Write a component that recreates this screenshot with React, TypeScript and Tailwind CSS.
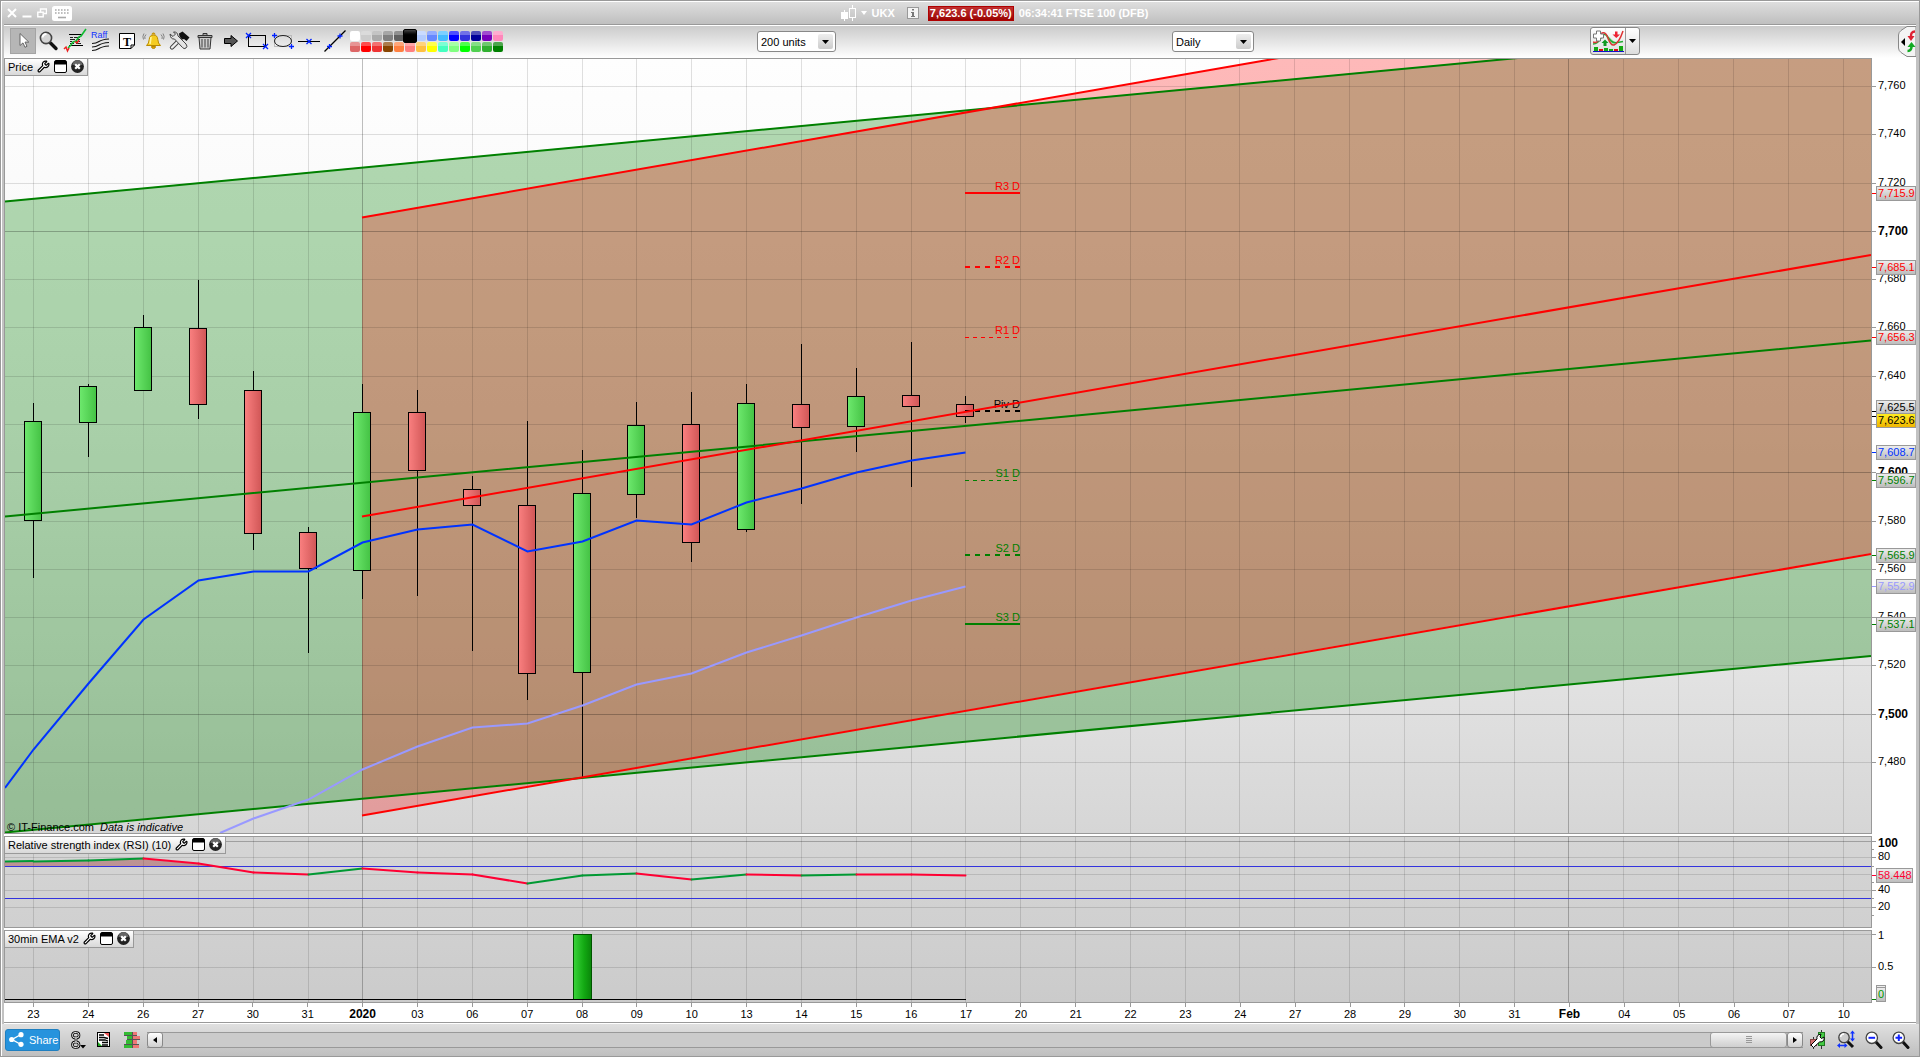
import React from "react";
import { Wrench } from "lucide-react";

/* ---------- data ---------- */

const DATES = [
  "23", "24", "26", "27", "30", "31", "2020", "03", "06", "07", "08", "09", "10", "13", "14", "15", "16",
  "17", "20", "21", "22", "23", "24", "27", "28", "29", "30", "31", "Feb", "04", "05", "06", "07", "10",
];
const isMajor = (label: string) => label === "2020" || label === "Feb";
const dateX = (i: number) => Math.floor(33.95 + 54.82 * i);
const priceY = (p: number) => Math.round(86 + (7760 - p) * 2.414);

const PRICES = [7760, 7740, 7720, 7700, 7680, 7660, 7640, 7620, 7600, 7580, 7560, 7540, 7520, 7500, 7480];
/* The last-price tag takes the place of this label on the scale. */
const COVERED_PRICE = 7620;

type Candle = [high: number, top: number, bottom: number, low: number, up: boolean];
const CANDLES: Candle[] = [
  [403, 421, 520, 578, true],
  [384, 386, 422, 457, true],
  [315, 327, 390, 390, true],
  [280, 328, 404, 419, false],
  [371, 390, 533, 550, false],
  [527, 532, 568, 653, false],
  [384, 412, 570, 599, true],
  [390, 412, 470, 596, false],
  [476, 489, 505, 651, false],
  [421, 505, 673, 700, false],
  [450, 493, 672, 777, true],
  [402, 425, 494, 518, true],
  [392, 424, 542, 562, false],
  [384, 403, 529, 532, true],
  [344, 404, 427, 504, false],
  [368, 396, 426, 452, true],
  [342, 395, 406, 487, false],
  [396, 404, 416, 423, false],
];

const FAST = [749, 683, 619, 580, 571, 571, 542, 529, 524, 551, 541, 520, 524, 502, 488, 472, 460, 452];
const SLOW = [818, 799, 769, 746, 727, 723, 705, 684, 673, 652, 635, 617, 600, 586];
const RSI = [861, 860, 858, 863, 872, 874, 868, 872, 874, 883, 875, 873, 879, 874, 875, 874, 874, 875];

const PIVOTS = [
  { label: "R3 D", y: 193, color: "#ff0000", width: 2, dash: undefined },
  { label: "R2 D", y: 267, color: "#ff0000", width: 2, dash: "5 5" },
  { label: "R1 D", y: 337, color: "#ff0000", width: 1, dash: "4 4" },
  { label: "Piv D", y: 411, color: "#000000", width: 2, dash: "5 5" },
  { label: "S1 D", y: 480, color: "#008000", width: 1, dash: "4 4" },
  { label: "S2 D", y: 555, color: "#008000", width: 2, dash: "5 5" },
  { label: "S3 D", y: 624, color: "#008000", width: 2, dash: undefined },
];

const TAGS = [
  { text: "7,715.9", y: 193, color: "#ff0000" },
  { text: "7,685.1", y: 267, color: "#ff0000" },
  { text: "7,656.3", y: 337, color: "#ff0000" },
  { text: "7,625.5", y: 407, color: "#000000" },
  { text: "7,623.6", y: 420, color: "#000000", hot: true },
  { text: "7,608.7", y: 452, color: "#0033ff" },
  { text: "7,596.7", y: 480, color: "#008000" },
  { text: "7,565.9", y: 555, color: "#008000" },
  { text: "7,552.9", y: 586, color: "#9999ff" },
  { text: "7,537.1", y: 624, color: "#008000" },
];

const SWATCHES = [
  ["#ffffff", "#cccccc", "#aaaaaa", "#808080", "#606060", "#000000", "#b3ccff", "#6688ff", "#44bbff", "#0000ff", "#3333dd", "#000099", "#7700bb", "#ff88bb"],
  ["#dd6666", "#ff0000", "#ee3333", "#884400", "#ff8040", "#ff8080", "#ffc040", "#ffff00", "#44ffc0", "#80ff80", "#00ff00", "#50d050", "#30b030", "#008000"],
];

const points = (ys: number[], from = 0) => ys.map((y, i) => `${dateX(i + from) + 0.5},${y + 0.5}`).join(" ");

/* ---------- chart pieces ---------- */

function VerticalGrid({ top, bottom }: { top: number; bottom: number }) {
  return (
    <g shapeRendering="crispEdges">
      {DATES.map((d, i) => (
        <line key={i} x1={dateX(i) + 0.5} x2={dateX(i) + 0.5} y1={top} y2={bottom} stroke="#000" strokeOpacity={isMajor(d) ? 0.25 : 0.12} />
      ))}
    </g>
  );
}

function HorizontalGrid({ rows }: { rows: { y: number; major?: boolean }[] }) {
  return (
    <g shapeRendering="crispEdges">
      {rows.map((r) => (
        <line key={r.y} x1={5} x2={1871} y1={r.y + 0.5} y2={r.y + 0.5} stroke="#000" strokeOpacity={r.major ? 0.25 : 0.12} />
      ))}
    </g>
  );
}

function PanelHeader({ title }: { title: string }) {
  return (
    <div className="absolute left-0 top-0 flex h-[17px] items-center gap-1 border-r border-b border-[#999] bg-linear-to-b from-white to-[#d8d8d8] px-[3px] pb-px">
      <span className="whitespace-nowrap">{title}</span>
      <button aria-label={`${title} settings`}>
        <Wrench className="size-[13px] fill-white text-black" strokeWidth={2.2} />
      </button>
      <button aria-label={`${title} window`}>
        <svg className="size-[13px]" viewBox="0 0 13 13">
          <rect x="0.5" y="0.5" width="12" height="12" rx="1.5" fill="#fff" stroke="#000" />
          <rect x="1" y="1" width="11" height="3.5" fill="#000" />
        </svg>
      </button>
      <button aria-label={`Close ${title}`}>
        <svg className="size-[13px]" viewBox="0 0 13 13">
          <circle cx="6.5" cy="6.5" r="6.4" fill="#222" />
          <path d="M1.5 5a5 5 0 0 1 10 0z" fill="#666" />
          <path d="M4.2 4.2l4.6 4.6M8.8 4.2L4.2 8.8" stroke="#fff" strokeWidth="2.2" />
        </svg>
      </button>
    </div>
  );
}

function Tag({ x = 1876, y, w = 39, text, color, hot }: { x?: number; y: number; w?: number; text: string; color: string; hot?: boolean }) {
  return (
    <g>
      <rect x={x + 0.5} y={y - 6.5} width={w} height={14} fill={hot ? "url(#hot)" : "url(#tag)"} stroke="#999" shapeRendering="crispEdges" />
      <text x={x + 2} y={y + 4} fill={color}>{text}</text>
    </g>
  );
}

function Tick({ y, len = 4, color = "#999" }: { y: number; len?: number; color?: string }) {
  return <rect x={1872} y={y} width={len} height={1} fill={color} shapeRendering="crispEdges" />;
}

function PricePanel() {
  return (
    <section className="flex min-h-0 flex-1">
      <div className="relative min-w-0 flex-1 border border-[#999]">
        <svg className="absolute inset-0 size-full" viewBox="5 59 1866 774" preserveAspectRatio="none" fontSize="11">
          <defs>
            <linearGradient id="back" x1="0" y1="0" x2="0" y2="1">
              <stop offset="0" stopColor="#fefefe" />
              <stop offset="0.2" stopColor="#fafafa" />
              <stop offset="0.45" stopColor="#f3f3f3" />
              <stop offset="0.8" stopColor="#e2e2e2" />
              <stop offset="1" stopColor="#d6d6d6" />
            </linearGradient>
            <linearGradient id="up">
              <stop offset="0" stopColor="#6ee96e" />
              <stop offset="1" stopColor="#44c244" />
            </linearGradient>
            <linearGradient id="down">
              <stop offset="0" stopColor="#fa8080" />
              <stop offset="1" stopColor="#d05656" />
            </linearGradient>
          </defs>
          <rect x="5" y="59" width="1866" height="774" fill="url(#back)" />
          <path d="M5 201L1871 24V656L5 832Z" fill="#008000" fillOpacity="0.3" />
          <path d="M362 217L1871 -45V553L362 815Z" fill="#ff0000" fillOpacity="0.27" />
          <VerticalGrid top={59} bottom={833} />
          <HorizontalGrid rows={PRICES.map((p) => ({ y: priceY(p), major: p % 100 === 0 }))} />

          <g shapeRendering="crispEdges">
            {CANDLES.map(([high, top, bottom, low, up], i) => (
              <g key={i} stroke="#000">
                <line x1={dateX(i) + 0.5} x2={dateX(i) + 0.5} y1={high} y2={low} />
                <rect x={dateX(i) - 8.5} y={top + 0.5} width={17} height={bottom - top} fill={up ? "url(#up)" : "url(#down)"} />
              </g>
            ))}
          </g>

          {PIVOTS.map((p) => (
            <g key={p.label}>
              <line
                x1={965}
                x2={1020}
                y1={p.width === 2 ? p.y : p.y + 0.5}
                y2={p.width === 2 ? p.y : p.y + 0.5}
                stroke={p.color}
                strokeWidth={p.width}
                strokeDasharray={p.dash}
              />
              <text x={1020} y={p.y - 3} textAnchor="end" fill={p.color}>{p.label}</text>
            </g>
          ))}

          <g stroke="#008000" strokeWidth="2">
            <path d="M5 201.5L1871 24.5M5 516.5L1871 340.5M5 832.5L1871 656" />
          </g>
          <g stroke="#ff0000" strokeWidth="2">
            <path d="M362 217.5L1871 -45M362 516.5L1871 255M362 815.5L1871 554" />
          </g>
          <polyline points={`220,833 ${points(SLOW, 4)}`} fill="none" stroke="#9999ff" strokeWidth="2" />
          <polyline points={`5,788 ${points(FAST)}`} fill="none" stroke="#0033ff" strokeWidth="2" />
          <text x="7" y="831">© IT-Finance.com</text>
          <text x="100" y="831" fontStyle="italic">Data is indicative</text>
        </svg>
        <PanelHeader title="Price" />
      </div>
      <svg className="h-full w-11 shrink-0" viewBox="1872 58 44 776" preserveAspectRatio="none" fontSize="11">
        <defs>
          <linearGradient id="tag" x1="0" y1="0" x2="0" y2="1">
            <stop offset="0" stopColor="#eeeeee" />
            <stop offset="1" stopColor="#bbbbbb" />
          </linearGradient>
          <linearGradient id="hot" x1="0" y1="0" x2="0" y2="1">
            <stop offset="0" stopColor="#ffee22" />
            <stop offset="1" stopColor="#f0b400" />
          </linearGradient>
        </defs>
        {PRICES.map((p) => (
          <g key={p}>
            <Tick y={priceY(p)} />
            {p !== COVERED_PRICE && (
              <text x={1878} y={priceY(p) + (p % 100 ? 3 : 4)} fontSize={p % 100 ? 11 : 12} fontWeight={p % 100 ? 400 : 700}>
                {p.toLocaleString("en-US")}
              </text>
            )}
          </g>
        ))}
        {[193, 267, 337].map((y) => <Tick key={y} y={y} color="#ff0000" />)}
        {[411, 416].map((y) => <Tick key={y} y={y} color="#000" />)}
        {[480, 555, 624].map((y) => <Tick key={y} y={y} color="#008000" />)}
        <Tick y={452} color="#0033ff" />
        <Tick y={586} color="#9999ff" />
        {TAGS.map((t) => <Tag key={t.text} {...t} />)}
      </svg>
    </section>
  );
}

function RsiPanel() {
  const rising = new Set([1, 2, 6, 10, 11, 13, 15]);
  return (
    <section className="flex h-[92px] shrink-0">
      <div className="relative min-w-0 flex-1 border border-[#999] bg-linear-to-b from-[#d5d5d5] to-[#d0d0d0]">
        <svg className="absolute inset-0 size-full" viewBox="5 837 1866 90" preserveAspectRatio="none">
          <VerticalGrid top={837} bottom={927} />
          <HorizontalGrid rows={[{ y: 841, major: true }, { y: 857 }, { y: 874 }, { y: 890 }, { y: 907 }]} />
          <path d="M5 862L143 859L198 864L215 866H5Z" fill="#8b0000" fillOpacity="0.3" />
          <path d="M5 866.5H1871M5 898.5H1871" stroke="#3333dd" shapeRendering="crispEdges" />
          <g strokeWidth="2" strokeLinecap="round">
            <line x1="5" y1="861.5" x2={dateX(0)} y2={RSI[0]} stroke="#009933" />
            {RSI.slice(1).map((y, k) => (
              <line key={k} x1={dateX(k) + 0.5} x2={dateX(k + 1) + 0.5} y1={RSI[k] + 0.5} y2={y + 0.5} stroke={rising.has(k + 1) ? "#009933" : "#ff0033"} />
            ))}
          </g>
        </svg>
        <PanelHeader title="Relative strength index (RSI) (10)" />
      </div>
      <svg className="h-full w-11 shrink-0" viewBox="1872 836 44 92" preserveAspectRatio="none" fontSize="11">
        {[841, 857, 890, 907].map((y) => <Tick key={y} y={y} />)}
        {[849, 866, 882, 898, 915].map((y) => <Tick key={y} y={y} len={2} />)}
        <Tick y={875} color="#ff0033" />
        <text x="1878" y="847" fontSize="12" fontWeight="700">100</text>
        <text x="1878" y="860">80</text>
        <text x="1878" y="893">40</text>
        <text x="1878" y="910">20</text>
        <Tag y={875} w={36} text="58.448" color="#ff0033" />
      </svg>
    </section>
  );
}

function EmaPanel() {
  return (
    <section className="flex h-[73px] shrink-0">
      <div className="relative min-w-0 flex-1 border border-[#999] bg-linear-to-b from-[#d0d0d0] to-[#cbcbcb]">
        <svg className="absolute inset-0 size-full" viewBox="5 931 1866 71" preserveAspectRatio="none">
          <defs>
            <linearGradient id="signal">
              <stop offset="0" stopColor="#3ad43a" />
              <stop offset="0.6" stopColor="#12a812" />
              <stop offset="1" stopColor="#0a850a" />
            </linearGradient>
          </defs>
          <VerticalGrid top={931} bottom={1002} />
          <HorizontalGrid rows={[{ y: 934 }, { y: 967 }]} />
          <rect x="573.5" y="934.5" width="18" height="65" fill="url(#signal)" stroke="#005500" shapeRendering="crispEdges" />
          <path d="M5 999.5H966" stroke="#000" shapeRendering="crispEdges" />
        </svg>
        <PanelHeader title="30min EMA v2" />
      </div>
      <svg className="h-full w-11 shrink-0" viewBox="1872 930 44 73" preserveAspectRatio="none" fontSize="11">
        <Tick y={934} />
        <Tick y={967} />
        <Tick y={999} color="#008000" />
        <text x="1878" y="939">1</text>
        <text x="1878" y="970">0.5</text>
        <rect x="1876.5" y="985.5" width="9" height="3" fill="#eee" stroke="#999" shapeRendering="crispEdges" />
        <Tag y={994} w={9} text="0" color="#009900" />
      </svg>
    </section>
  );
}

function DateAxis() {
  return (
    <div className="flex h-[19px] shrink-0 pr-[45px] pl-[2px]">
      {DATES.map((d, i) => (
        <div key={i} className="flex w-0 flex-1 flex-col items-center">
          <div className="h-1 w-px bg-[#999]" />
          <span className={isMajor(d) ? "text-[12px] leading-[14px] font-bold" : "text-[11px] leading-[14px]"}>{d}</span>
        </div>
      ))}
    </div>
  );
}

/* ---------- window chrome ---------- */

function TitleBar() {
  return (
    <header className="flex h-[22px] shrink-0 items-center bg-linear-to-b from-[#dedede] to-[#bfbfbf] font-bold text-white">
      <div className="flex w-[70px] shrink-0 items-center gap-[5px] pl-[5px]">
        <button aria-label="Close">
          <svg className="size-[10px]" viewBox="0 0 10 10"><path d="M1 1l8 8M9 1L1 9" stroke="#fff" strokeWidth="2" /></svg>
        </button>
        <button aria-label="Minimise">
          <svg className="size-[10px]" viewBox="0 0 10 10"><path d="M0.5 8.5h9" stroke="#fff" strokeWidth="2" /></svg>
        </button>
        <button aria-label="Restore">
          <svg className="size-[10px]" viewBox="0 0 10 10" fill="none" stroke="#fff" strokeWidth="1.4">
            <path d="M3.5 4V1h6v4.5H7" /><rect x="0.8" y="4.2" width="5.4" height="4.6" />
          </svg>
        </button>
        <button aria-label="Keyboard">
          <svg className="h-[15px] w-5" viewBox="0 0 20 15">
            <rect width="20" height="15" rx="2.5" fill="#fff" />
            <path d="M3 4h14M3 7h14" stroke="#aaa" strokeWidth="1.6" strokeDasharray="1.6 1.4" />
            <path d="M6 11.5h8" stroke="#aaa" strokeWidth="1.6" />
          </svg>
        </button>
      </div>
      <div className="flex flex-1 items-center justify-center pr-[2px] whitespace-nowrap">
        <svg className="h-4 w-[15px]" viewBox="0 0 15 16" fill="none" stroke="#fff">
          <path d="M3.5 5v11M11.5 0v3M11.5 13v3" />
          <rect x="0.5" y="7.5" width="6" height="6" fill="#fff" />
          <rect x="8.5" y="3.5" width="6" height="9" />
        </svg>
        <svg className="ml-[5px] h-1 w-[6px]" viewBox="0 0 6 4"><path d="M0 0h6L3 4z" fill="#fff" /></svg>
        <span className="ml-[5px]">UKX</span>
        <svg className="ml-3 size-3" viewBox="0 0 12 12">
          <rect x="0.5" y="0.5" width="11" height="11" fill="#f4f4f4" stroke="#999" />
          <path d="M5 2h2v1.6H5zM4 5h3v4h1v1H4V9h1V6H4z" fill="#777" />
        </svg>
        <span className="ml-[9px] border border-[#b00000] bg-linear-to-b from-[#c03030] to-[#9c0000] px-px leading-[13px]">7,623.6 (-0.05%)</span>
        <span className="ml-[5px]">06:34:41 FTSE 100 (DFB)</span>
      </div>
    </header>
  );
}

function ToolButton({ label, active, children }: { label: string; active?: boolean; children: React.ReactNode }) {
  return (
    <button
      aria-label={label}
      className={
        active
          ? "flex h-[26px] w-[26px] items-center justify-center border border-[#a4a4a4] bg-[#b6b6b6]"
          : "flex h-[26px] w-[26px] items-center justify-center"
      }
    >
      <svg className="size-[22px] overflow-visible" viewBox="0 0 22 22" fill="none">{children}</svg>
    </button>
  );
}

function SelectBox({ label, value, className }: { label: string; value: string; className: string }) {
  return (
    <div className={className}>
      <select aria-label={label} defaultValue={value} className="h-[21px] w-full appearance-none rounded-[3px] border border-[#888] bg-white pl-[3px] text-[11px]">
        <option>{value}</option>
      </select>
      <span className="pointer-events-none absolute top-[3px] right-[3px] flex size-[15px] items-center justify-center rounded-[2px] bg-linear-to-b from-[#eee] to-[#ccc]">
        <svg className="h-1 w-[7px]" viewBox="0 0 7 4"><path d="M0 0h7L3.5 4z" fill="#000" /></svg>
      </span>
    </div>
  );
}

function Palette() {
  return (
    <div className="ml-[2px] grid grid-cols-[repeat(14,10px)] gap-px pt-[3px]">
      {SWATCHES.flat().map((c, i) => (
        <button
          key={i}
          aria-label={`Colour ${c}`}
          className={
            i === 5
              ? "relative z-10 -m-[2px] size-[14px] rounded-[2px] border border-black bg-linear-to-b from-[#444] via-black to-black"
              : "size-[10px] rounded-[2px]"
          }
          style={i === 5 ? undefined : { background: `linear-gradient(rgba(255,255,255,.3) 35%, transparent 45%), ${c}` }}
        />
      ))}
    </div>
  );
}

function Toolbar() {
  return (
    <div className="flex h-8 shrink-0 items-start bg-linear-to-b from-[#cbcbcb] to-white pt-[2px] pl-[6px]">
      <ToolButton label="Pointer" active>
        <path d="M8 3.5v12l3-2.6 2 4.4 2-1-2-4.2h3.8z" fill="#fff" stroke="#666" />
      </ToolButton>
      <ToolButton label="Zoom">
        <path d="M12.5 13l5.5 5.5" stroke="#111" strokeWidth="3.4" strokeLinecap="round" />
        <circle cx="8" cy="8" r="5.6" fill="#d4d4d4" stroke="#444" strokeWidth="1.6" />
        <path d="M4.5 7.5a4 4 0 0 1 4-3.5" stroke="#fff" strokeWidth="2" />
      </ToolButton>
      <ToolButton label="Orders">
        <path d="M5 4.500h14M5 15.500h14" stroke="#000" shapeRendering="crispEdges" />
        <path d="M6 7.500h3M10 7.500h6M6 9.500h5M13 9.500h3M6 11.500h2M9 11.500h7M6 13.500h4M12 13.500h5" stroke="#222" shapeRendering="crispEdges" />
        <path d="M4 18l3-3 2-3 3-1 3-4 2-1 5-7" stroke="#11bb33" strokeWidth="1.600" />
        <path d="M0 19l2-2 1.500 4 1.500-3M11 11.500l2 1.500 2-3" stroke="#ee2222" strokeWidth="1.500" />
      </ToolButton>
      <ToolButton label="Raff regression">
        <text x="1" y="8" fontSize="9" fill="#1133ff">Raff</text>
        <path d="M2 13.500q4 0 7-2t10-2.500M2 17q4 0 7-2t10-2.500M2 20.500q4 0 7-2t10-2.500" stroke="#111" strokeWidth="1.200" />
      </ToolButton>
      <ToolButton label="Text">
        <path d="M3.500 3.500h15v11.500l-3.500 3.500h-11.500z" fill="#fff" stroke="#000" />
        <path d="M18.500 15h-3.500v3.500" stroke="#000" />
        <text x="11" y="15.500" textAnchor="middle" fontSize="12" fontWeight="700" fontFamily="Liberation Serif, serif" fill="#000">T</text>
      </ToolButton>
      <ToolButton label="Alerts">
        <path d="M4.500 15.500q2.500-2 2.700-6c.3-3 1.500-4.500 4.300-4.500s4 1.500 4.300 4.500q.2 4 2.700 6z" fill="#f5cc22" stroke="#b98a00" />
        <path d="M9 7q-.5 4-1 7" stroke="#fff6a0" strokeWidth="1.600" />
        <path d="M10 4.500a1.500 1.500 0 0 1 3 0M9.500 16.500a2 2 0 0 0 4 0z" fill="#e0a000" stroke="#b98a00" />
        <path d="M4 4.500q-2 2-1 4.500M2 3.500q-2 3-.5 6M19 4.500q2 2 1 4.500M21 3.500q2 3 .5 6" stroke="#777" strokeWidth="0.900" />
      </ToolButton>
      <ToolButton label="Tools">
        <path d="M4 17.500l8-8" stroke="#444" strokeWidth="4.400" strokeLinecap="round" />
        <path d="M4 17.500l8-8" stroke="#eee" strokeWidth="2.400" strokeLinecap="round" />
        <path d="M2 4l3 2.500L7.500 4 5.500 2q4-.5 4.500 4l8 8q2 2.500 0 4t-3.500-.5l-8-8.500Q2.500 9.500 2 4z" fill="#e4e4e4" stroke="#444" />
        <path d="M11 3.500l3.500-2 7 6-3 3.500-2.500-2-1.500.5-3-3z" fill="#111" />
      </ToolButton>
      <ToolButton label="Delete">
        <path d="M5 7.500h12l-1 11.500h-10z" fill="#ccc" stroke="#333" />
        <path d="M8 9v8.500M11 9v8.500M14 9v8.500" stroke="#555" strokeWidth="1.200" />
        <path d="M4 5.500h14v2h-14zM9 5V3.500h4V5" fill="#aaa" stroke="#333" />
      </ToolButton>
      <ToolButton label="Arrow">
        <path d="M4.500 8.500h6.500v-3l6.500 5.500-6.500 5.500v-3h-6.500z" fill="#555" stroke="#000" />
      </ToolButton>
      <ToolButton label="Rectangle">
        <rect x="2.500" y="5.500" width="17" height="11" stroke="#000" />
        <path d="M0 3l5 5M5 3l-5 5M17 14l5 5M22 14l-5 5" stroke="#0022ff" strokeWidth="1.300" />
      </ToolButton>
      <ToolButton label="Ellipse">
        <rect x="2.500" y="5.500" width="17" height="11" stroke="#bbb" />
        <ellipse cx="11" cy="11" rx="8.500" ry="5.500" stroke="#222" />
        <path d="M0 5.500h5M2.500 3v5M17 16.500h5M19.500 14v5" stroke="#0022ff" strokeWidth="1.300" />
      </ToolButton>
      <ToolButton label="Horizontal line">
        <path d="M0 11.500h22" stroke="#000" />
        <path d="M8.500 9l5 5M13.500 9l-5 5" stroke="#0022ff" strokeWidth="1.300" />
      </ToolButton>
      <ToolButton label="Trend line">
        <path d="M0.500 21.500L21.500 0.500" stroke="#000" strokeWidth="1.200" />
        <path d="M3 16.500h5M5.500 14v5M13.500 6h5M16 3.500v5" stroke="#0022ff" strokeWidth="1.300" />
      </ToolButton>
      <Palette />
      <div className="flex-[254]" />
      <SelectBox label="Units" value="200 units" className="relative mt-[3px] w-[79px]" />
      <div className="flex-[336]" />
      <SelectBox label="Timeframe" value="Daily" className="relative mt-[3px] w-[82px]" />
      <div className="flex-[336]" />
      <div className="-mt-px flex h-7 w-[50px] rounded-[3px] border border-[#888] bg-linear-to-b from-white to-[#ddd]">
        <button aria-label="Add indicator" className="flex w-[35px] items-center justify-center border-r border-[#999]">
          <svg className="h-[22px] w-[31px]" viewBox="0 0 31 22" fill="none">
            <path d="M13 6q3 8 6 9.500l5-3q-4-1-7-5z" fill="#a8e0a8" />
            <path d="M0 14q5 0 8-6t6-2q4 6 7 6.500t9-1" stroke="#22aa33" strokeWidth="1.500" />
            <path d="M0 12q5 3 9-9 4-1 6 5 3 8 6 7 5-2 9-14" stroke="#dd3333" strokeWidth="1.500" />
            <path d="M3.500 1h4v3h3v4h-3v3h-4v-3h-3v-4h3z" fill="#fff" stroke="#777" />
            <path d="M22 1.500h2.500v3H27l-3.700 3.500L19.500 4.500H22z" fill="#ee2233" />
            <path d="M10.500 16h3v-3h2L12 9.500 8.500 13h2z" fill="#119922" />
            <path d="M1 17h4v4H1zM11 18h4v3h-4zM16 19h4v2h-4zM26 16h4v5h-4z" fill="#11aa11" />
            <path d="M6 19h4v2H6zM21 19h4v2h-4z" fill="#dd1111" />
            <path d="M0 21.500h31" stroke="#1111cc" />
          </svg>
        </button>
        <button aria-label="Indicator list" className="flex flex-1 items-center justify-center">
          <svg className="h-1 w-[7px]" viewBox="0 0 7 4"><path d="M0 0h7L3.500 4z" fill="#000" /></svg>
        </button>
      </div>
      <div className="flex-[258]" />
      <button aria-label="Open side panel" className="-mt-[2px]">
        <svg className="h-[31px] w-[18px]" viewBox="0 0 18 31" fill="none">
          <path d="M18 0.500H9L3 4.500Q0.500 6.500 0.500 9v13q0 2.500 2.500 4.500l6 4h9z" fill="#f4f4f4" stroke="#888" />
          <path d="M3 16l4-4v8z" fill="#000" />
          <path d="M17 5.500q-4.500 0-4 5.500" stroke="#dd2233" strokeWidth="2.500" />
          <path d="M9.500 10h7l-3.500 5z" fill="#dd2233" />
          <path d="M9.500 25q4.500 0 4-6" stroke="#11aa22" strokeWidth="2.500" />
          <path d="M9.500 21h8l-4-5z" fill="#11aa22" />
        </svg>
      </button>
    </div>
  );
}

function BottomBar() {
  return (
    <footer className="flex h-8 shrink-0 items-center bg-linear-to-b from-[#e0e0e0] to-[#bfbfbf] pb-px pl-[3px]">
      <button className="flex h-[22px] w-[55px] shrink-0 items-center gap-[5px] rounded-[3px] border border-[#1f7fc0] bg-[#2693dd] pl-[3px] text-white">
        <svg className="size-[15px]" viewBox="0 0 15 15" fill="#fff">
          <path d="M12 2.500L3 7.500l9 5" fill="none" stroke="#fff" strokeWidth="1.400" />
          <circle cx="12" cy="2.700" r="2.600" /><circle cx="2.700" cy="7.500" r="2.600" /><circle cx="12" cy="12.300" r="2.600" />
        </svg>
        Share
      </button>
      <button aria-label="Link charts" className="ml-[11px]">
        <svg className="h-[18px] w-4" viewBox="0 0 16 18" fill="none">
          <g stroke="#000" strokeWidth="2.600">
            <rect x="1.500" y="1.500" width="6.500" height="5.500" rx="2.500" />
            <rect x="1.500" y="11" width="6.500" height="5.500" rx="2.500" />
            <path d="M5 5v8" />
          </g>
          <g stroke="#fff" strokeWidth="0.900">
            <rect x="1.500" y="1.500" width="6.500" height="5.500" rx="2.500" />
            <rect x="1.500" y="11" width="6.500" height="5.500" rx="2.500" />
            <path d="M5 5v8" />
          </g>
          <path d="M9 14h6l-3 3.500z" fill="#000" />
        </svg>
      </button>
      <button aria-label="Order list" className="ml-[10px]">
        <svg className="h-[15px] w-[13px]" viewBox="0 0 13 15">
          <rect x="0.500" y="0.500" width="12" height="14" fill="#fff" stroke="#000" />
          <path d="M2 3h5M2 5.500h5l4 1M2 8h6l3 1M5 10.500h6M5 13h6" stroke="#000" strokeWidth="1.300" fill="none" />
          <path d="M7 1h5v4z" fill="#ee5555" /><path d="M1 10l4 4H1z" fill="#22aa22" />
        </svg>
      </button>
      <button aria-label="Order book" className="ml-[14px]">
        <svg className="size-4" viewBox="0 0 16 16" shapeRendering="crispEdges">
          <path d="M0 0h8v3H0zM3 4h5v3H3zM2 8h6v4H2zM0 13h8v3H0z" fill="#33bb33" />
          <path d="M9 0h4v3H9zM9 4h7v3H9zM9 8h4v4H9zM9 13h6v3H9z" fill="#ee7777" />
          <path d="M0 3.500h13M3 7.500h13M0 12.500h15M8.500 0v16" stroke="#555" />
        </svg>
      </button>
      <div className="ml-[7px] flex h-4 flex-1 border-y border-[#999] bg-[#cbcbcb]">
        <button aria-label="Scroll left" className="-my-px flex w-4 items-center justify-center rounded-[3px] border border-[#888] bg-linear-to-b from-white to-[#d0d0d0]">
          <svg className="h-[6px] w-1" viewBox="0 0 4 6"><path d="M4 0v6L0 3z" fill="#000" /></svg>
        </button>
        <div className="flex-1" />
        <div className="-my-px flex w-[77px] items-center justify-center rounded-[3px] border border-[#999] bg-linear-to-b from-[#f4f4f4] to-[#cfcfcf]">
          <svg className="h-[7px] w-[6px]" viewBox="0 0 6 7"><path d="M0 .5h6M0 2.500h6M0 4.500h6M0 6.500h6" stroke="#999" /></svg>
        </div>
        <button aria-label="Scroll right" className="-my-px flex w-4 items-center justify-center rounded-[3px] border border-[#888] bg-linear-to-b from-white to-[#d0d0d0]">
          <svg className="h-[6px] w-1" viewBox="0 0 4 6"><path d="M0 0v6l4-3z" fill="#000" /></svg>
        </button>
      </div>
      <div className="flex w-[116px] shrink-0 items-center gap-[9px] pl-[7px]">
        <button aria-label="Chart settings">
          <svg className="h-[19px] w-4" viewBox="0 0 16 19">
            <path d="M11.500 0v19M3.500 7v12" stroke="#333" />
            <rect x="8.500" y="2.500" width="6" height="13" fill="#44cc44" stroke="#227722" />
            <rect x="0.500" y="9.500" width="6" height="6" fill="#d07070" stroke="#884444" />
            <path d="M1 15l6-6q-1-4 4-5l-1 3 1.500 1.500L14 7q1 5-4.500 5L3.500 17.500z" fill="#fff" stroke="#000" />
          </svg>
        </button>
        <button aria-label="Fit" className="ml-[2px]">
          <svg className="size-[19px] overflow-visible" viewBox="0 0 19 19" fill="none">
            <path d="M10 11l6 6" stroke="#111" strokeWidth="3" />
            <circle cx="7" cy="7.500" r="5.200" fill="#ccc" stroke="#444" strokeWidth="1.300" />
            <path d="M3.500 7q.5-3 3.500-3" stroke="#fff" strokeWidth="1.600" />
            <path d="M15.500 2v8M2 15.500h7" stroke="#1133ff" strokeWidth="1.500" />
            <path d="M13 3.500L15.500 0.500 18 3.500zM13 8.500l2.500 3 2.500-3zM3 13l-3 2.500 3 2.500zM7.500 13l3 2.500-3 2.500z" fill="#1133ff" />
          </svg>
        </button>
        {["out", "in"].map((dir) => (
          <button key={dir} aria-label={`Zoom ${dir}`}>
            <svg className="size-[18px]" viewBox="0 0 18 18" fill="none">
              <path d="M10.500 10.500l5.500 6" stroke="#111" strokeWidth="3" strokeLinecap="round" />
              <circle cx="6.800" cy="6.800" r="5.700" fill="#fff" stroke="#444" strokeWidth="1.300" />
              <path d={dir === "in" ? "M3.500 6.800h6.600M6.800 3.500v6.600" : "M3.500 6.800h6.600"} stroke="#1122ff" strokeWidth="2" />
            </svg>
          </button>
        ))}
      </div>
    </footer>
  );
}

export default function App() {
  return (
    <div className="flex h-screen flex-col border border-[#999] bg-[#c2c2c2] font-['Liberation_Sans',Arial,sans-serif] text-[11px] leading-[14px] text-black">
      <div className="flex min-h-0 flex-1 flex-col border-t border-l border-white">
        <TitleBar />
        <main className="mr-[3px] ml-[2px] flex min-h-0 flex-1 flex-col bg-white">
          <div className="h-px shrink-0 bg-[#999]" />
          <div className="h-px shrink-0 bg-white" />
          <Toolbar />
          <div className="flex min-h-0 flex-1 flex-col gap-[2px]">
            <PricePanel />
            <RsiPanel />
            <EmaPanel />
          </div>
          <DateAxis />
          <div className="h-px shrink-0 bg-[#999]" />
          <div className="h-px shrink-0 bg-white" />
        </main>
        <BottomBar />
      </div>
    </div>
  );
}
